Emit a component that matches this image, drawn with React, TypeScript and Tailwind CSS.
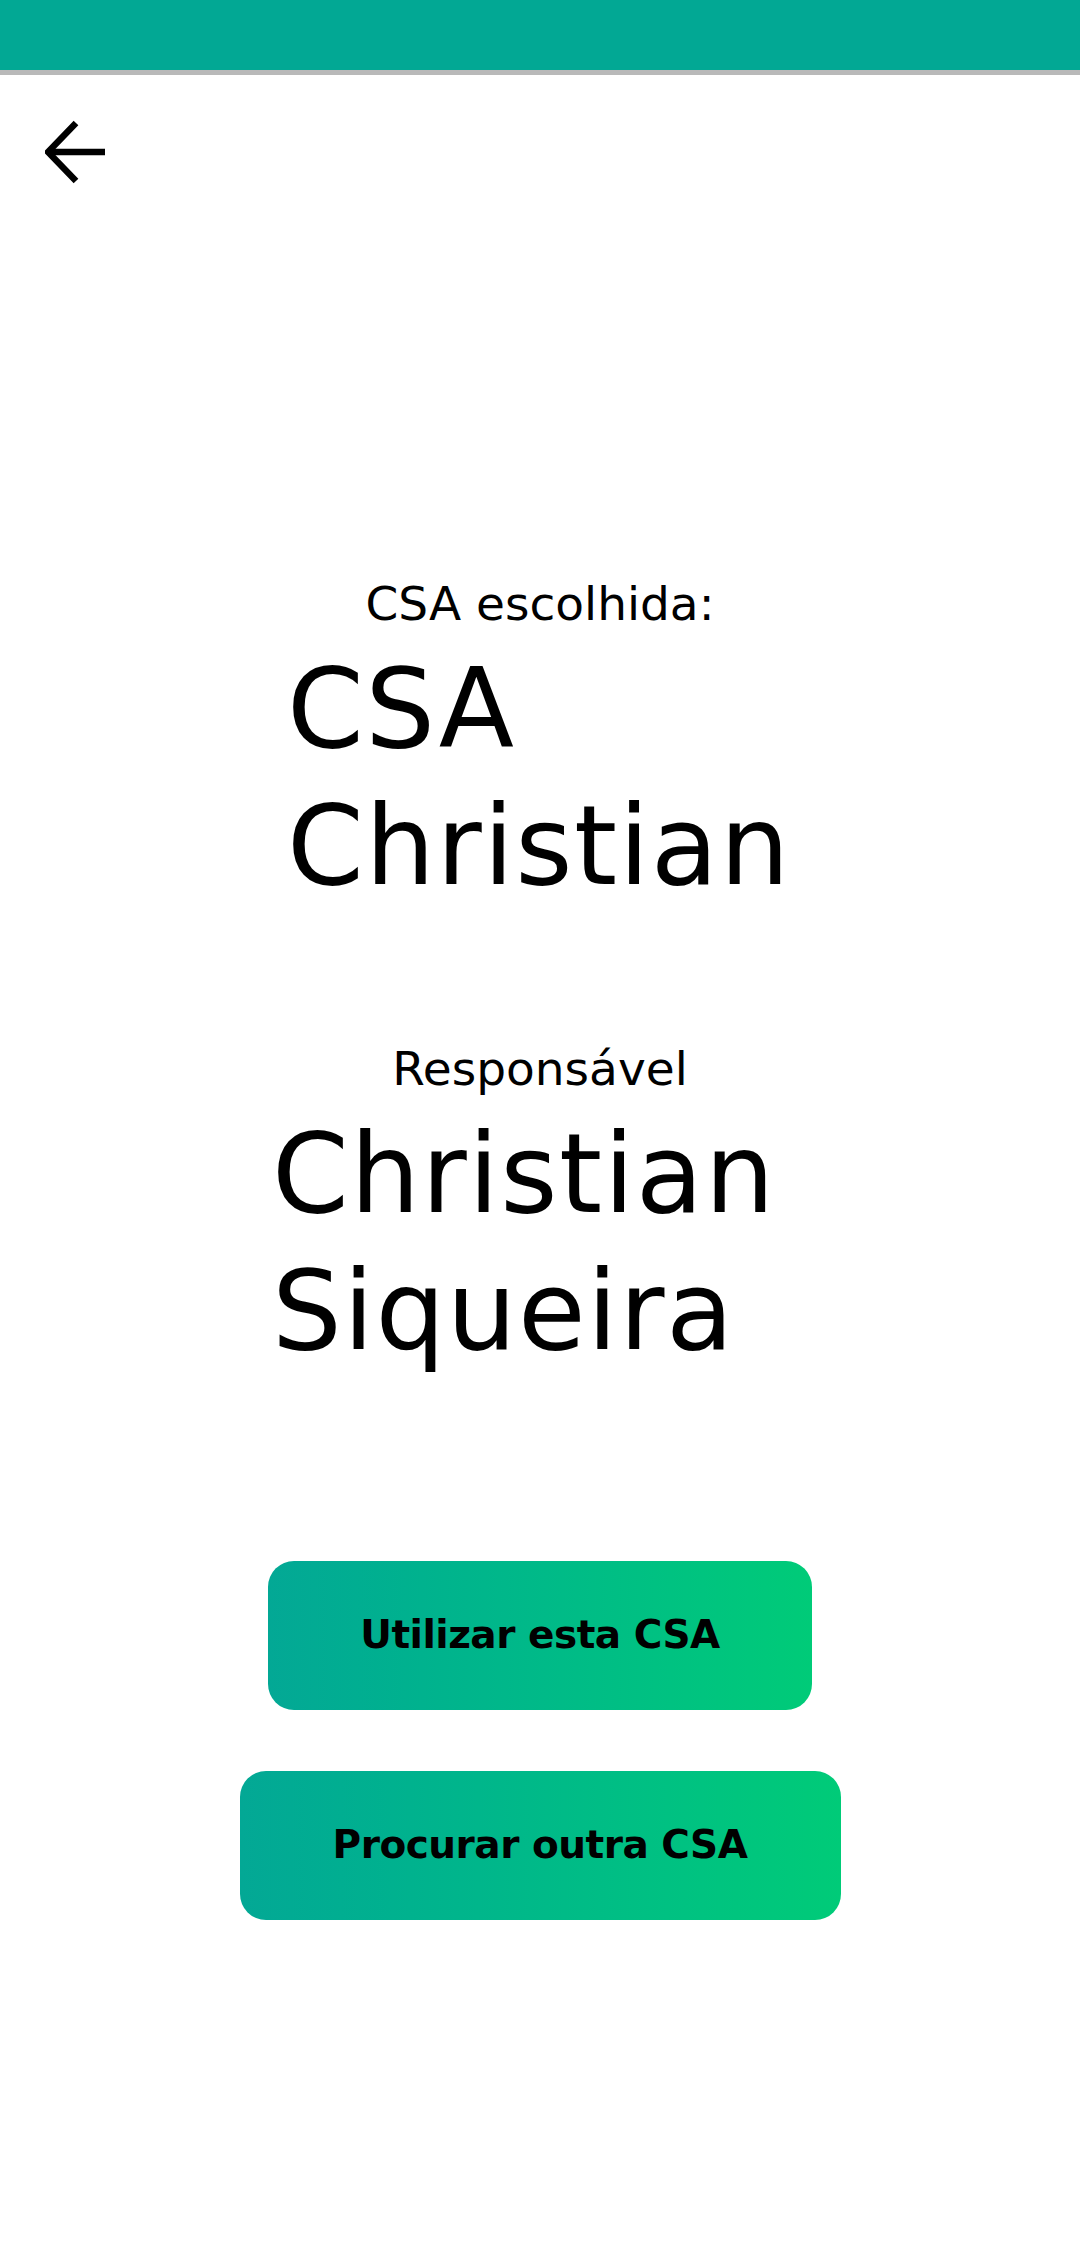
import React from "react";

export default function App() {
  return (
    <div className="min-h-[2249px] w-[1080px] bg-white text-black" style={{ fontFamily: "'DejaVu Sans', 'Noto Sans', sans-serif" }}>
      <div className="h-[70px] bg-[#02A894]" />
      <div className="h-[5px] bg-[#B9B9B9]" />
      <div className="pl-[45px] pt-[45px]">
        <svg width="62" height="64" viewBox="0 0 62 64" fill="none" stroke="#000" strokeWidth="6.5">
          <path d="M5 32 H60" />
          <path d="M31 3 L3 32 L31 61" strokeLinejoin="miter" />
        </svg>
      </div>
      <div className="mt-[392px] text-center text-[47px] leading-[56px]">CSA escolhida:</div>
      <div className="mt-[9px] ml-[287px] w-[540px] text-[110px] leading-[137px] tracking-[1.5px]">CSA Christian</div>
      <div className="mt-[126px] text-center text-[47px] leading-[56px]">Responsável</div>
      <div className="mt-[9px] ml-[272px] w-[540px] text-[110px] leading-[137px] tracking-[1.5px]">Christian Siqueira</div>
      <div className="mt-[181px] flex flex-col items-center gap-[61px]">
        <button className="flex h-[149px] w-[544px] items-center justify-center rounded-[26px] bg-linear-to-r from-[#03A895] to-[#00CB78] text-[39px] font-bold tracking-[-0.5px] text-black">
          Utilizar esta CSA
        </button>
        <button className="flex h-[149px] w-[601px] items-center justify-center rounded-[26px] bg-linear-to-r from-[#03A895] to-[#00CB78] text-[39px] font-bold tracking-[-0.5px] text-black">
          Procurar outra CSA
        </button>
      </div>
    </div>
  );
}
